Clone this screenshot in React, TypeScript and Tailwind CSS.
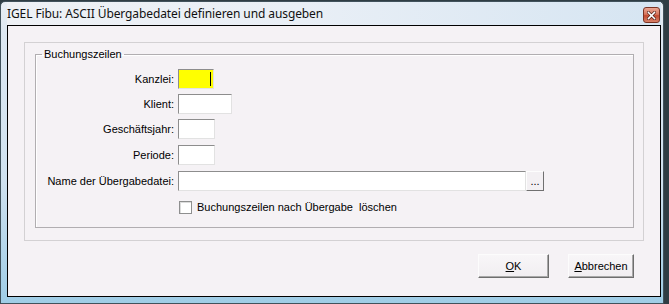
import type { ReactNode } from "react";

function Field({ width, yellow, caret }: { width: string; yellow?: boolean; caret?: boolean }) {
  return (
    <div
      className={`relative h-[20px] ${width} border border-t-[#8d8d8d] border-l-[#8d8d8d] border-r-[#e2e2e2] border-b-[#e2e2e2] ${
        yellow ? "bg-[#ffff00]" : "bg-white"
      }`}
    >
      {caret ? <div className="absolute right-[2px] top-[2px] h-[14px] w-px bg-black" /> : null}
    </div>
  );
}

function Row({ label, top, children }: { label: string; top: string; children: ReactNode }) {
  return (
    <div className={`flex h-[20px] items-center ${top}`}>
      <div className="w-[139px] pr-px text-right">{label}</div>
      <div className="ml-[3px] flex items-center">{children}</div>
    </div>
  );
}

function DlgButton({ children, width }: { children: ReactNode; width: string }) {
  return (
    <button
      className={`flex h-[24px] ${width} items-center justify-center border border-t-[#fcfcfc] border-l-[#fcfcfc] border-r-[#6e6e6e] border-b-[#6e6e6e] bg-[linear-gradient(180deg,#f8f6f8_0%,#f1eef1_100%)] shadow-[inset_-1px_-1px_0_#a8a8a8]`}
    >
      {children}
    </button>
  );
}

export default function App() {
  return (
    <div className="h-[304px] w-[669px] overflow-hidden bg-[#2f3d44] pt-px font-['Liberation_Sans',Arial,sans-serif] text-[11px] leading-[13px] text-black">
      <div className="flex h-[303px] w-[664px] flex-col rounded-t-[5px] border border-[#41525c] bg-[linear-gradient(180deg,#e9eef4_0%,#dde8f2_10%,#cfe1ef_60%,#9fcde6_100%)] pl-[6px] pr-[2px]">
        <header className="flex h-[23px] shrink-0 items-center justify-between bg-[linear-gradient(90deg,#eef1f5_0%,#e9eff6_45%,#d6e5f2_100%)]">
          <div className="font-['Noto_Sans',sans-serif] text-[12px] tracking-[-0.1px] text-[#111]">
            IGEL Fibu: ASCII Übergabedatei definieren und ausgeben
          </div>
          <div className="mr-px mt-[5px] flex h-[16px] w-[17px] items-center justify-center self-start rounded-[3px] border border-[#7b3424] bg-[linear-gradient(180deg,#eba794_0%,#d7765e_45%,#c24a30_55%,#d8826a_100%)]">
            <svg width="9" height="9" viewBox="0 0 9 9">
              <path d="M1.5 1.5 L7.5 7.5 M7.5 1.5 L1.5 7.5" stroke="#4a1a12" strokeWidth="3" strokeLinecap="square" />
              <path d="M1.5 1.5 L7.5 7.5 M7.5 1.5 L1.5 7.5" stroke="#ffffff" strokeWidth="1.6" strokeLinecap="square" />
            </svg>
          </div>
        </header>

        <main className="flex h-[272px] shrink-0 flex-col border border-black bg-[#f5f2f5] px-[16px] pt-[16px]">
          <div className="flex h-[199px] flex-col border border-[#d3d1d3] px-[10px] pb-[12px] pr-[9px]">
            <fieldset className="mt-[5px] flex flex-1 flex-col border border-[#b1aeb1] shadow-[inset_1px_1px_0_#ffffff]">
              <legend className="ml-[6px] px-[2px] leading-[13px]">Buchungszeilen</legend>

              <Row label="Kanzlei:" top="mt-[8px]">
                <Field width="w-[36px]" yellow caret />
              </Row>
              <Row label="Klient:" top="mt-[5px]">
                <Field width="w-[54px]" />
              </Row>
              <Row label="Geschäftsjahr:" top="mt-[5px]">
                <Field width="w-[37px]" />
              </Row>
              <Row label="Periode:" top="mt-[6px]">
                <Field width="w-[37px]" />
              </Row>
              <Row label="Name der Übergabedatei:" top="mt-[6px]">
                <Field width="w-[348px]" />
                <div className="flex h-[20px] w-[18px] items-end justify-center border border-t-[#fdfdfd] border-l-[#fdfdfd] border-r-[#707070] border-b-[#707070] bg-[#f3f0f3] pb-[3px] leading-none">
                  ...
                </div>
              </Row>

              <div className="mt-[10px] flex items-center pl-[143px]">
                <div className="h-[13px] w-[13px] border border-[#8e8f8f] bg-white shadow-[inset_1px_1px_0_#dcdcdc]" />
                <span className="ml-[5px] whitespace-pre">Buchungszeilen nach Übergabe  löschen</span>
              </div>
            </fieldset>
          </div>

          <div className="mt-[13px] flex justify-end gap-[19px] pr-[10px]">
            <DlgButton width="w-[71px]">
              <span>
                <span className="underline">O</span>K
              </span>
            </DlgButton>
            <DlgButton width="w-[66px]">
              <span>
                <span className="underline">A</span>bbrechen
              </span>
            </DlgButton>
          </div>
        </main>
      </div>
    </div>
  );
}
